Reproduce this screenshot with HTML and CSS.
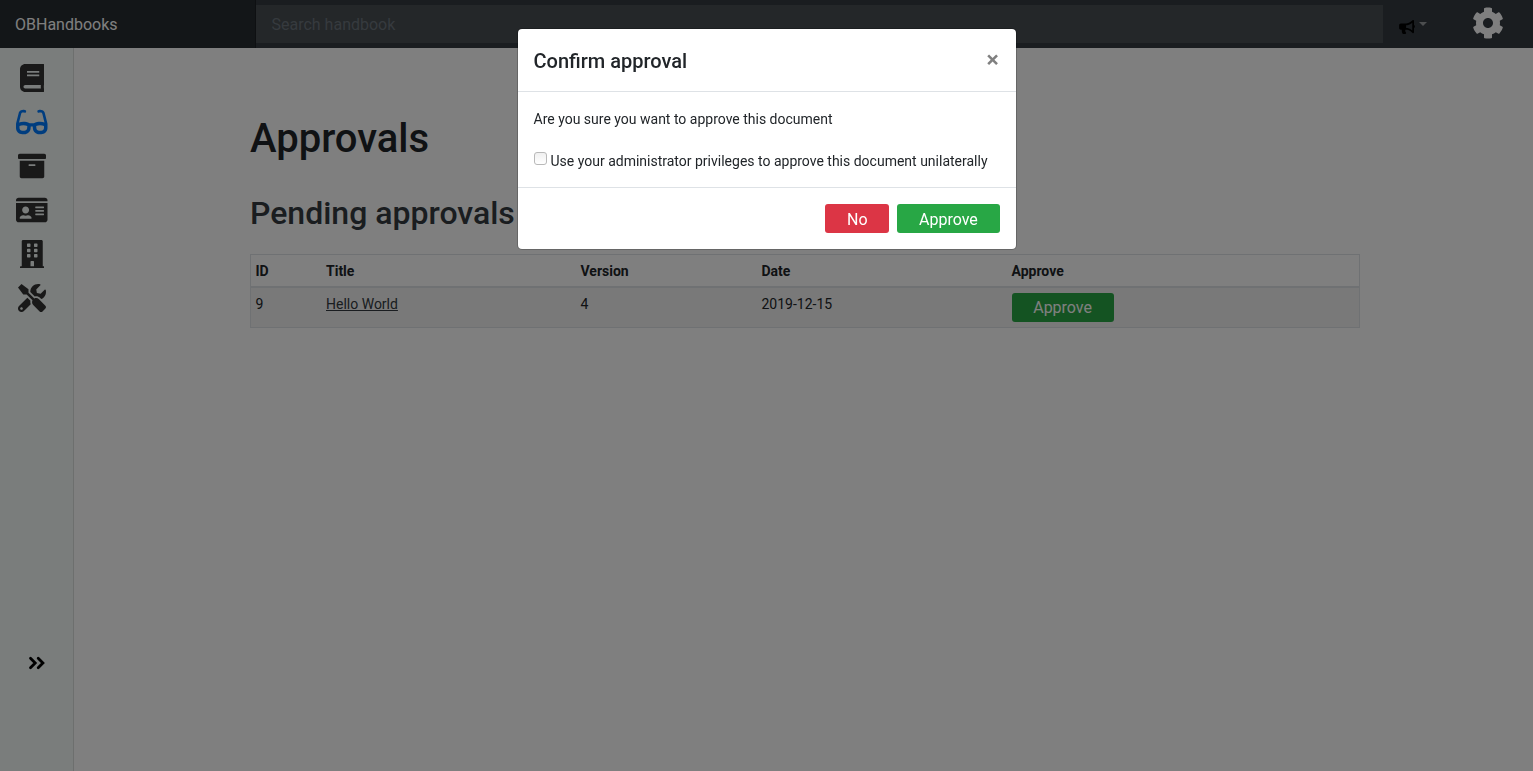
FILE: index.html
```html
<!DOCTYPE html>
<html lang="en">
<head>
<meta charset="utf-8">
<title>OBHandbooks</title>
<link rel="stylesheet" href="styles.css">
</head>
<body>
<header class="navbar">
  <a class="brand">OBHandbooks</a>
  <input class="search" type="text" placeholder="Search handbook">
  <div class="news">
    <svg class="bullhorn" viewBox="0 0 576 512"><path d="M576 240c0-23.63-12.95-44.04-32-55.12V32.01C544 23.26 537.02 0 512 0c-7.12 0-14.19 2.38-19.98 7.02l-85.03 68.03C364.28 109.19 310.66 128 256 128H64c-35.35 0-64 28.65-64 64v96c0 35.35 28.65 64 64 64h33.7c-1.39 10.48-2.18 21.14-2.18 32 0 39.77 9.26 77.35 25.56 110.94 5.19 10.69 16.52 17.06 28.4 17.06h74.28c26.05 0 41.69-29.84 25.9-50.56-16.4-21.52-26.15-48.36-26.15-77.44 0-11.11 1.62-21.79 4.41-32H256c54.66 0 108.28 18.81 150.98 52.95l85.03 68.03a32.023 32.023 0 0 0 19.98 7.02c24.92 0 32-22.78 32-32V295.13C563.05 284.04 576 263.63 576 240zm-96 141.42l-33.05-26.44C392.95 311.78 325.12 288 256 288v-96c69.12 0 136.95-23.78 190.95-66.98L480 98.58v282.84z"/></svg>
    <span class="caret"></span>
  </div>
  <svg class="cog" viewBox="0 0 512 512"><path d="M487.4 315.7l-42.6-24.6c4.3-23.2 4.3-47 0-70.2l42.6-24.6c4.9-2.8 7.1-8.6 5.5-14-11.1-35.6-30-67.8-54.7-94.6-3.8-4.1-10-5.1-14.8-2.3L380.8 110c-17.9-15.4-38.5-27.3-60.8-35.1V25.8c0-5.6-3.9-10.5-9.4-11.7-36.7-8.2-74.3-7.8-109.2 0-5.5 1.2-9.4 6.1-9.4 11.7V75c-22.2 7.9-42.8 19.8-60.8 35.1L88.7 85.5c-4.9-2.8-11-1.9-14.8 2.3-24.7 26.7-43.6 58.9-54.7 94.6-1.7 5.4.6 11.2 5.5 14L67.3 221c-4.3 23.2-4.3 47 0 70.2l-42.6 24.6c-4.9 2.8-7.1 8.6-5.5 14 11.1 35.6 30 67.8 54.7 94.6 3.8 4.1 10 5.1 14.8 2.3l42.6-24.6c17.9 15.4 38.5 27.3 60.8 35.1v49.2c0 5.6 3.9 10.5 9.4 11.7 36.7 8.2 74.3 7.8 109.2 0 5.5-1.2 9.4-6.1 9.4-11.7v-49.2c22.2-7.9 42.8-19.8 60.8-35.1l42.6 24.6c4.9 2.8 11 1.9 14.8-2.3 24.7-26.7 43.6-58.9 54.7-94.6 1.5-5.5-.7-11.3-5.6-14.1zM256 336c-44.1 0-80-35.9-80-80s35.9-80 80-80 80 35.9 80 80-35.9 80-80 80z"/></svg>
</header>
<div class="layout">
  <nav class="sidebar">
    <ul class="menu">
      <li><svg class="icon" viewBox="0 0 448 512"><path d="M448 360V24c0-13.3-10.7-24-24-24H96C43 0 0 43 0 96v320c0 53 43 96 96 96h328c13.3 0 24-10.7 24-24v-16c0-7.5-3.5-14.3-8.9-18.7-4.2-15.4-4.2-59.3 0-74.7 5.4-4.3 8.9-11.1 8.9-18.6zM128 134c0-3.3 2.7-6 6-6h212c3.3 0 6 2.7 6 6v20c0 3.3-2.7 6-6 6H134c-3.3 0-6-2.7-6-6v-20zm0 64c0-3.3 2.7-6 6-6h212c3.3 0 6 2.7 6 6v20c0 3.3-2.7 6-6 6H134c-3.3 0-6-2.7-6-6v-20zm253.4 250H96c-17.7 0-32-14.3-32-32 0-17.6 14.4-32 32-32h285.4c-1.9 17.1-1.9 46.9 0 64z"/></svg></li>
      <li class="active"><svg class="icon" viewBox="0 0 576 512"><path d="M574.1 280.37L528.75 98.66c-5.91-23.7-21.59-44.05-43-55.81-21.44-11.73-46.97-14.11-70.19-6.33l-15.25 5.08c-8.39 2.79-12.92 11.86-10.12 20.24l5.06 15.18c2.79 8.38 11.85 12.91 20.23 10.12l13.18-4.39c10.87-3.62 23-3.57 33.16 1.73 10.29 5.37 17.57 14.56 20.37 25.82l38.46 153.82c-22.19-6.81-49.79-12.46-81.2-12.46-34.77 0-73.98 7.02-114.85 26.74h-73.18c-40.87-19.74-80.08-26.75-114.86-26.75-31.42 0-59.02 5.65-81.21 12.46l38.46-153.83c2.79-11.25 10.09-20.45 20.38-25.81 10.16-5.3 22.28-5.35 33.15-1.73l13.17 4.39c8.38 2.79 17.44-1.74 20.23-10.12l5.06-15.18c2.8-8.38-1.73-17.45-10.12-20.24l-15.25-5.08c-23.22-7.78-48.75-5.41-70.19 6.33-21.41 11.77-37.09 32.11-43 55.8L1.9 280.37A64.218 64.218 0 0 0 0 295.86v70.25C0 429.01 51.58 480 115.2 480h37.12c60.28 0 110.37-45.94 114.88-105.37l2.93-38.63h35.75l2.93 38.63C313.31 434.06 363.4 480 423.68 480h37.12c63.62 0 115.2-50.99 115.2-113.88v-70.25c0-5.23-.64-10.43-1.9-15.5zm-370.72 89.42c-1.97 25.91-24.4 46.21-51.06 46.21H115.2C86.97 416 64 393.62 64 366.11v-37.54c18.12-6.49 43.42-12.92 72.58-12.92 23.86 0 47.26 4.33 69.93 12.92l-3.13 41.22zM512 366.12c0 27.51-22.97 49.88-51.2 49.88h-37.12c-26.67 0-49.1-20.3-51.06-46.21l-3.13-41.22c22.67-8.59 46.08-12.92 69.95-12.92 29.12 0 54.43 6.44 72.55 12.93v37.54z"/></svg></li>
      <li><svg class="icon" viewBox="0 0 512 512"><path d="M32 448c0 17.7 14.3 32 32 32h384c17.7 0 32-14.3 32-32V160H32v288zm160-212c0-6.6 5.4-12 12-12h104c6.6 0 12 5.4 12 12v8c0 6.6-5.4 12-12 12H204c-6.6 0-12-5.4-12-12v-8zM480 32H32C14.3 32 0 46.3 0 64v48c0 8.8 7.2 16 16 16h480c8.8 0 16-7.2 16-16V64c0-17.7-14.3-32-32-32z"/></svg></li>
      <li><svg class="icon" viewBox="0 0 576 512"><path d="M528 32H48C21.5 32 0 53.5 0 80v16h576V80c0-26.5-21.5-48-48-48zM0 432c0 26.5 21.5 48 48 48h480c26.5 0 48-21.5 48-48V128H0v304zm352-232c0-4.4 3.6-8 8-8h144c4.4 0 8 3.6 8 8v16c0 4.4-3.6 8-8 8H360c-4.4 0-8-3.6-8-8v-16zm0 64c0-4.4 3.6-8 8-8h144c4.4 0 8 3.6 8 8v16c0 4.4-3.6 8-8 8H360c-4.4 0-8-3.6-8-8v-16zm0 64c0-4.4 3.6-8 8-8h144c4.4 0 8 3.6 8 8v16c0 4.4-3.6 8-8 8H360c-4.4 0-8-3.6-8-8v-16zM176 192c35.3 0 64 28.7 64 64s-28.7 64-64 64-64-28.7-64-64 28.7-64 64-64zM67.1 396.2C75.5 370.5 99.6 352 128 352h8.2c12.3 5.1 25.7 8 39.8 8s27.6-2.9 39.8-8h8.2c28.4 0 52.5 18.5 60.9 44.2 3.2 9.9-5.2 19.8-15.6 19.8H82.7c-10.4 0-18.8-10-15.6-19.8z"/></svg></li>
      <li><svg class="icon" viewBox="0 0 448 512"><path fill-rule="evenodd" d="M436 480h-20V24c0-13.3-10.7-24-24-24H56C42.7 0 32 10.7 32 24v456H12c-6.6 0-12 5.4-12 12v20h448v-20c0-6.6-5.4-12-12-12zM140 64h40q12 0 12 12v40q0 12-12 12h-40q-12 0-12-12V76q0-12 12-12zm128 0h40q12 0 12 12v40q0 12-12 12h-40q-12 0-12-12V76q0-12 12-12zM140 160h40q12 0 12 12v40q0 12-12 12h-40q-12 0-12-12v-40q0-12 12-12zm128 0h40q12 0 12 12v40q0 12-12 12h-40q-12 0-12-12v-40q0-12 12-12zM140 256h40q12 0 12 12v40q0 12-12 12h-40q-12 0-12-12v-40q0-12 12-12zm128 0h40q12 0 12 12v40q0 12-12 12h-40q-12 0-12-12v-40q0-12 12-12zM192 480v-84q0-12 12-12h40q12 0 12 12v84z"/></svg></li>
      <li><svg class="icon" viewBox="0 0 512 512"><path d="M501.1 395.7L384 278.6c-23.1-23.1-57.6-27.6-85.4-13.9L192 158.1V96L64 0 0 64l96 128h62.1l106.6 106.6c-13.6 27.8-9.2 62.3 13.9 85.4l117.1 117.1c14.6 14.6 38.2 14.6 52.7 0l52.7-52.7c14.5-14.6 14.5-38.2 0-52.7zM331.7 225c28.3 0 54.9 11 74.9 31l19.4 19.4c15.8-6.9 30.8-16.5 43.8-29.5 37.1-37.1 49.7-89.3 37.9-136.7-2.2-9-13.5-12.1-20.1-5.5l-74.4 74.4-67.9-11.3L334 98.9l74.4-74.4c6.6-6.6 3.4-17.9-5.7-20.2-47.4-11.7-99.6.9-136.6 37.9-28.5 28.5-41.9 66.1-41.2 103.6l82.1 82.1c8.1-1.9 16.5-2.9 24.7-2.9zm-103.9 82l-56.7-56.7L18.7 402.8c-25 25-25 65.5 0 90.5s65.5 25 90.5 0l123.6-123.6c-7.6-19.9-9.9-41.6-5-62.7zM64 472c-13.2 0-24-10.8-24-24 0-13.3 10.7-24 24-24s24 10.7 24 24c0 13.2-10.7 24-24 24z"/></svg></li>
    </ul>
    <svg class="expand" viewBox="0 0 18 14"><path d="M2.5 2.3 7.2 7l-4.7 4.7M10.2 2.3 14.9 7l-4.7 4.7"/></svg>
  </nav>
  <main class="content">
    <h1>Approvals</h1>
    <h2>Pending approvals</h2>
    <table class="table">
      <colgroup><col class="c-id"><col class="c-title"><col class="c-version"><col class="c-date"><col></colgroup>
      <thead><tr><th>ID</th><th>Title</th><th>Version</th><th>Date</th><th>Approve</th></tr></thead>
      <tbody><tr><td>9</td><td><a class="link">Hello World</a></td><td>4</td><td>2019-12-15</td><td class="action"><button class="btn success">Approve</button></td></tr></tbody>
    </table>
  </main>
</div>
<div class="backdrop">
  <section class="modal">
    <div class="modal-header"><h5>Confirm approval</h5><button class="close">×</button></div>
    <div class="modal-body">
      <p>Are you sure you want to approve this document</p>
      <label><span class="checkbox"></span>Use your administrator privileges to approve this document unilaterally</label>
    </div>
    <div class="modal-footer"><button class="btn danger">No</button><button class="btn success">Approve</button></div>
  </section>
</div>
</body>
</html>
```
FILE: styles.css
```css
* { box-sizing: border-box; }
body {
  margin: 0;
  height: 771px;
  overflow: hidden;
  display: flex;
  flex-direction: column;
  background: #fff;
  color: #212529;
  font: 14px/21px Roboto, sans-serif;
}
h1, h2, h5, p, ul { margin: 0; padding: 0; }
h1, h2, h5 { font-weight: 500; line-height: 1.2; }

.navbar {
  flex: none;
  height: 48px;
  display: flex;
  align-items: center;
  background: #343a40;
}
.brand {
  width: 256px;
  height: 48px;
  padding-left: 15px;
  line-height: 50px;
  font-size: 16px;
  color: #fff;
  background: #272c30;
  box-shadow: inset -1px 0 0 rgba(0, 0, 0, .25);
}
.search {
  width: 1127px;
  height: 38px;
  padding: 0 15px 0 15.5px;
  border: 0;
  background: #484e53;
  font: 16px Roboto, sans-serif;
}
.search::placeholder { color: #6c757d; opacity: 1; }
.news { display: flex; align-items: center; margin-left: 16px; }
.bullhorn { width: 16px; height: 14px; margin-top: 5px; fill: #000; }
.caret {
  margin: 0 0 0 4px;
  border: 4px solid transparent;
  border-top-color: #999c9f;
  border-bottom: 0;
}
.cog { width: 32px; height: 32px; margin: -2px 0 0 45px; fill: #fff; }

.layout { flex: 1; display: flex; }
.sidebar {
  width: 74px;
  display: flex;
  flex-direction: column;
  justify-content: space-between;
  padding: 16px 0 101px;
  background: #f5faf8;
  border-right: 1px solid #dbdfdd;
}
.menu { width: 64px; display: grid; gap: 16px; list-style: none; }
.menu li { height: 28px; display: flex; justify-content: center; }
.icon { height: 28px; fill: #333; }
.active .icon { fill: #007bff; }
.expand {
  width: 18px;
  height: 14px;
  margin-left: 28px;
  fill: none;
  stroke: #000;
  stroke-width: 2.8;
  stroke-linecap: round;
}

.content { width: 1110px; margin-left: 176px; padding-top: 67px; }
h1 { font-size: 40px; }
h2 { font-size: 32px; margin: 31px 0 22px; color: #343a40; }
.table {
  width: 1110px;
  table-layout: fixed;
  border-collapse: collapse;
  border: 1px solid #dee2e6;
}
.c-id { width: 71px; }
.c-title { width: 254.5px; }
.c-version { width: 181px; }
.c-date { width: 250px; }
th, td { padding: 6px 4.5px 4px; text-align: left; vertical-align: top; }
.action { padding: 5px 4.5px; }
th { font-weight: 700; border-bottom: 2px solid #dee2e6; }
tbody tr { background: #f2f2f2; }
.link { color: #343a40; text-decoration: underline; }

.btn {
  display: block;
  height: 29px;
  padding: 0 21.7px;
  border: 0;
  border-radius: 3px;
  color: #fff;
  font: 16px/29px Roboto, sans-serif;
}
.success { background: #28a745; }
.danger { background: #dc3545; }

.backdrop {
  position: fixed;
  inset: 0;
  padding-top: 28px;
  background: rgba(0, 0, 0, .5);
}
.modal {
  width: 500px;
  margin: 0 auto;
  background: #fff;
  background-clip: padding-box;
  border: 1px solid rgba(0, 0, 0, .2);
  border-radius: 5px;
}
.modal-header {
  display: flex;
  justify-content: space-between;
  padding: 16px;
  border-bottom: 1px solid #dee2e6;
}
.modal-header h5 { font-size: 20px; line-height: 32px; height: 30px; }
.close {
  border: 0;
  padding: 0;
  background: none;
  color: #808080;
  font: 700 24px/27px "Open Sans", sans-serif;
  height: 27px;
}
.modal-body { display: grid; gap: 21px; padding: 17px 16px 15px; }
.modal-body label { display: flex; white-space: nowrap; }
.checkbox {
  width: 13px;
  height: 13px;
  margin: 1px 3.5px 0 .5px;
  border: 1px solid #b9b9b9;
  border-radius: 3px;
  background: linear-gradient(#f0f0f0, #fff);
}
.modal-footer {
  display: flex;
  justify-content: flex-end;
  gap: 8px;
  padding: 16px;
  border-top: 1px solid #dee2e6;
}
.modal-footer .btn { padding-top: 2px; line-height: 27px; }
```
